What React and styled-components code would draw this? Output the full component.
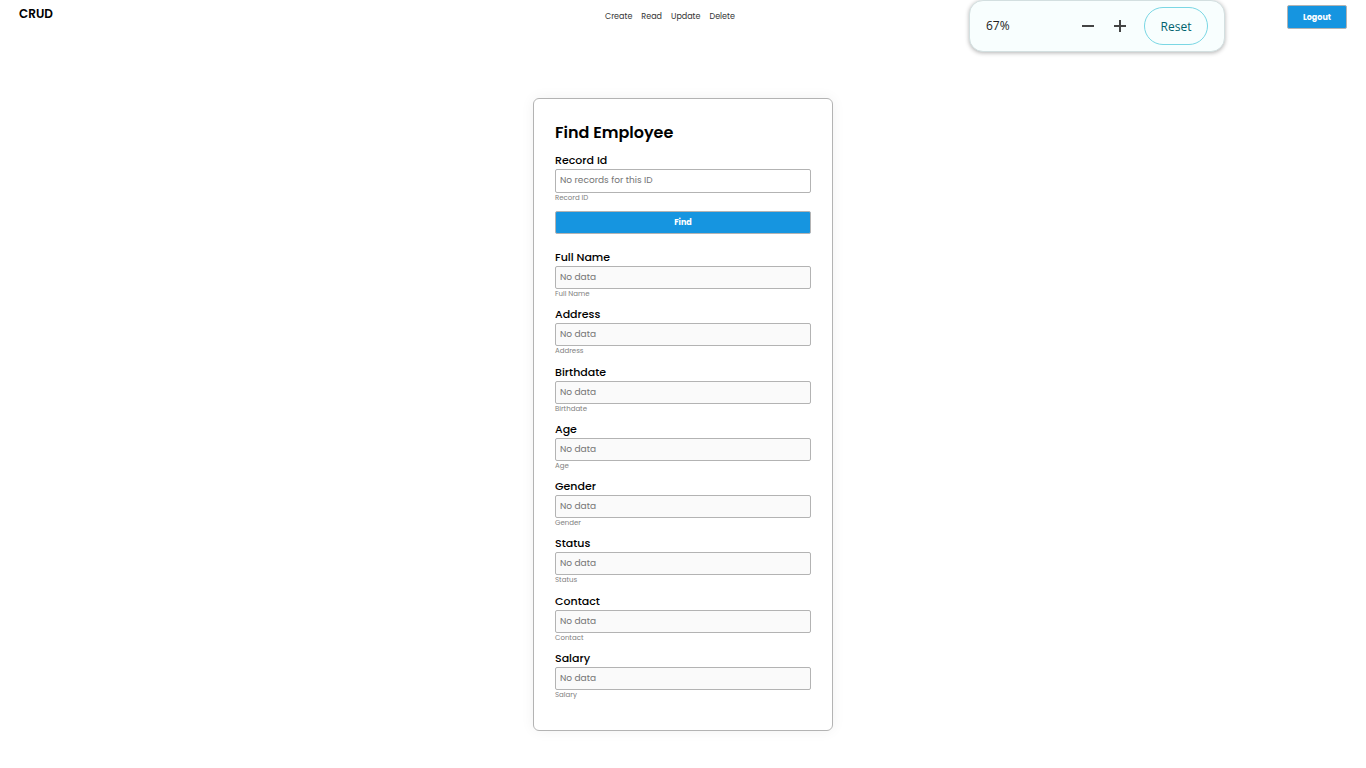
import React from "react";
import styled, { createGlobalStyle } from "styled-components";

const GlobalStyle = createGlobalStyle`
  *, *::before, *::after { box-sizing: border-box; }
  body {
    margin: 0;
    background: #fff;
    color: #000;
    font-family: Poppins, Inter, "Open Sans", sans-serif;
  }
  button, input { font-family: inherit; }
`;

const Header = styled.header`
  display: flex;
  justify-content: space-between;
  align-items: flex-start;
  padding: 5px 19px;
`;

const Brand = styled.div`
  font-size: 12px;
  line-height: 18px;
  font-weight: 600;
`;

const Nav = styled.nav`
  display: flex;
  gap: 9px;
`;

const NavLink = styled.a`
  font-size: 8px;
  line-height: 24px;
  color: #333;
  text-decoration: none;
`;

const Button = styled.button`
  height: ${(p) => (p.$block ? 23 : 24)}px;
  width: ${(p) => (p.$block ? "100%" : "60px")};
  padding: 1px 0 0;
  border: 1px solid #b3b3b3;
  border-radius: 2px;
  background: #1695e0;
  color: #fff;
  font-size: 8px;
  line-height: 12px;
  font-weight: 700;
`;

const Main = styled.main`
  display: flex;
  justify-content: center;
  padding: 64px 16px 36px;
`;

const Card = styled.form`
  width: 300px;
  padding: 21px 21px 30px;
  border: 1px solid #b3b3b3;
  border-radius: 6px;
  box-shadow: 0 0 14px rgba(0, 0, 0, 0.06);
`;

const Title = styled.h1`
  margin: 0 0 6px;
  font-size: 16px;
  line-height: 26px;
  font-weight: 600;
`;

const FieldBox = styled.div`
  display: flex;
  flex-direction: column;
`;

const Label = styled.label`
  font-size: 11px;
  line-height: 17px;
  font-weight: 500;
`;

const Input = styled.input`
  width: 100%;
  height: ${(p) => (p.readOnly ? 23 : 24)}px;
  padding: ${(p) => (p.readOnly ? "0 4px" : "0 4px 2px")};
  border: 1px solid #b3b3b3;
  border-radius: 2px;
  background: ${(p) => (p.readOnly ? "#fafafa" : "#fff")};
  font-size: 9px;
  outline: none;
  &::placeholder { color: #757575; opacity: 1; }
`;

const Hint = styled.small`
  font-size: 7px;
  line-height: 10px;
  color: #808080;
`;

const Search = styled.div`
  display: grid;
  gap: 8px;
  margin-bottom: 15px;
`;

const Details = styled.div`
  display: grid;
  align-content: space-between;
  min-height: 451px;
`;

const ZoomBubble = styled.aside`
  position: absolute;
  top: 0;
  right: 141px;
  display: flex;
  align-items: center;
  width: 256px;
  height: 52px;
  padding: 0 16px;
  border: 1px solid #d3dfe0;
  border-radius: 14px;
  background: #f8fefe;
  box-shadow: 0 1px 4px rgba(0, 0, 0, 0.3);
  font-family: "Open Sans", "Noto Sans", sans-serif;
`;

const ZoomValue = styled.output`
  flex: 1;
  font-size: 12px;
  line-height: 18px;
  color: #222;
`;

const IconButton = styled.button`
  display: grid;
  place-items: center;
  width: 32px;
  height: 32px;
  padding: 0;
  border: 0;
  background: none;
  color: #444;
`;

const ResetButton = styled.button`
  width: 64px;
  height: 38px;
  margin-left: 8px;
  padding: 0;
  border: 1px solid #7ad7e4;
  border-radius: 19px;
  background: transparent;
  color: #00626e;
  font-size: 12px;
  font-weight: 500;
`;

const details = ["Full Name", "Address", "Birthdate", "Age", "Gender", "Status", "Contact", "Salary"];

function Field({ id, label, hint, ...rest }) {
  return (
    <FieldBox>
      <Label htmlFor={id}>{label}</Label>
      <Input id={id} type="text" {...rest} />
      <Hint>{hint}</Hint>
    </FieldBox>
  );
}

export default function App() {
  return (
    <>
      <GlobalStyle />
      <Header>
        <Brand>CRUD</Brand>
        <Nav>
          {["Create", "Read", "Update", "Delete"].map((name) => (
            <NavLink key={name} href={`#${name.toLowerCase()}`}>{name}</NavLink>
          ))}
        </Nav>
        <Button type="button">Logout</Button>
      </Header>
      <Main>
        <Card onSubmit={(e) => e.preventDefault()}>
          <Title>Find Employee</Title>
          <Search>
            <Field id="record-id" label="Record Id" hint="Record ID" placeholder="No records for this ID" />
            <Button type="submit" $block>Find</Button>
          </Search>
          <Details>
            {details.map((name) => (
              <Field
                key={name}
                id={name.toLowerCase().replace(" ", "-")}
                label={name}
                hint={name}
                placeholder="No data"
                readOnly
              />
            ))}
          </Details>
        </Card>
      </Main>
      <ZoomBubble>
        <ZoomValue>67%</ZoomValue>
        <IconButton type="button" aria-label="Zoom out">
          <svg width="12" height="12" viewBox="0 0 12 12" shapeRendering="crispEdges">
            <path d="M0 5h12v2H0z" fill="currentColor" />
          </svg>
        </IconButton>
        <IconButton type="button" aria-label="Zoom in">
          <svg width="12" height="12" viewBox="0 0 12 12" shapeRendering="crispEdges">
            <path d="M0 5h5V0h2v5h5v2H7v5H5V7H0z" fill="currentColor" />
          </svg>
        </IconButton>
        <ResetButton type="button">Reset</ResetButton>
      </ZoomBubble>
    </>
  );
}
